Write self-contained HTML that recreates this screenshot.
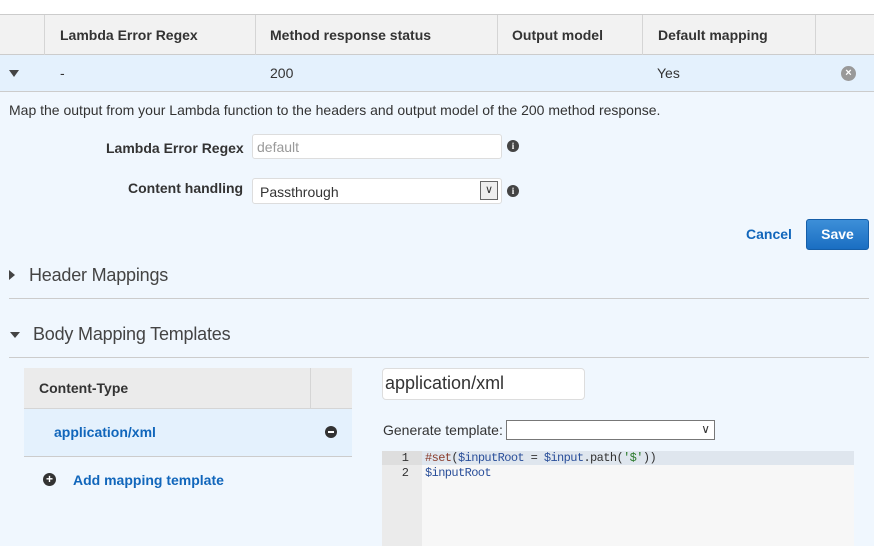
<!DOCTYPE html>
<html><head><meta charset="utf-8"><style>
*{margin:0;padding:0;box-sizing:border-box}
body{width:874px;height:546px;overflow:hidden;background:#f0f7fe;font-family:"Liberation Sans",Arial,sans-serif;font-size:14px;color:#333;position:relative}
.a{position:absolute}
.b{font-weight:bold}
.sep{position:absolute;top:0;width:1px;height:40px;background:#d5d5d5}
.info{position:absolute;width:12px;height:12px;border-radius:50%;background:#444;color:#fff;font:bold 9px "Liberation Serif",serif;text-align:center;line-height:12px}
</style></head><body>
<div class="a" style="left:0;top:0;width:874px;height:14px;background:#fff"></div>
<div class="a" style="left:0;top:14px;width:874px;height:41px;background:#f2f2f2;border-top:1px solid #ccc;border-bottom:1px solid #ccc">
<div class="sep" style="left:44px"></div><div class="sep" style="left:255px"></div><div class="sep" style="left:497px"></div><div class="sep" style="left:642px"></div><div class="sep" style="left:815px"></div>
<div class="a b" style="left:60px;top:12px">Lambda Error Regex</div>
<div class="a b" style="left:270px;top:12px">Method response status</div>
<div class="a b" style="left:512px;top:12px">Output model</div>
<div class="a b" style="left:658px;top:12px">Default mapping</div>
</div>
<div class="a" style="left:0;top:55px;width:874px;height:37px;background:#e4f1fd;border-bottom:1px solid #ccc">
<div class="a" style="left:9px;top:15px;width:0;height:0;border-left:5px solid transparent;border-right:5px solid transparent;border-top:7px solid #444"></div>
<div class="a" style="left:60px;top:10px">-</div>
<div class="a" style="left:270px;top:10px">200</div>
<div class="a" style="left:657px;top:10px">Yes</div>
<div class="a" style="left:841px;top:11px;width:15px;height:15px;border-radius:50%;background:#999;color:#fff;font:bold 11px sans-serif;text-align:center;line-height:15px">×</div>
</div>
<div class="a" style="left:9px;top:102px">Map the output from your Lambda function to the headers and output model of the 200 method response.</div>
<div class="a b" style="left:106px;top:140px">Lambda Error Regex</div>
<div class="a" style="left:252px;top:134px;width:250px;height:25px;background:#fff;border:1px solid #ddd;border-radius:3px;color:#999;padding:4px 4px;font-size:14px">default</div>
<div class="info" style="left:507px;top:140px">i</div>
<div class="a b" style="left:128px;top:180px">Content handling</div>
<div class="a" style="left:252px;top:178px;width:250px;height:26px;background:#fff;border:1px solid #ddd;border-radius:3px;padding:5px 7px">Passthrough</div>
<div class="a" style="left:480px;top:181px;width:18px;height:19px;border:1px solid #666;background:#eee;font-size:11px;text-align:center;line-height:17px">∨</div>
<div class="info" style="left:507px;top:185px">i</div>
<div class="a b" style="left:746px;top:226px;color:#1166bb">Cancel</div>
<div class="a b" style="left:806px;top:219px;width:63px;height:31px;background:linear-gradient(#3d8fd8,#1a6ec2);border:1px solid #155ea8;border-radius:3px;color:#fff;text-align:center;line-height:29px">Save</div>
<div class="a" style="left:9px;top:270px;width:0;height:0;border-top:5px solid transparent;border-bottom:5px solid transparent;border-left:6px solid #444"></div>
<div class="a" style="left:29px;top:265px;font-size:18px;color:#444;letter-spacing:-0.2px">Header Mappings</div>
<div class="a" style="left:9px;top:298px;width:860px;height:1px;background:#ccc"></div>
<div class="a" style="left:10px;top:332px;width:0;height:0;border-left:5px solid transparent;border-right:5px solid transparent;border-top:6px solid #444"></div>
<div class="a" style="left:33px;top:324px;font-size:18px;color:#444;letter-spacing:-0.2px">Body Mapping Templates</div>
<div class="a" style="left:9px;top:357px;width:860px;height:1px;background:#ccc"></div>
<div class="a" style="left:24px;top:368px;width:328px;height:41px;background:#ebebeb;border-bottom:1px solid #d5d5d5"><div class="a" style="left:286px;top:0;width:1px;height:40px;background:#d5d5d5"></div>
<div class="a b" style="left:15px;top:12px">Content-Type</div></div>
<div class="a" style="left:24px;top:409px;width:328px;height:48px;background:#e4f1fd;border-bottom:1px solid #ccc">
<div class="a b" style="left:30px;top:15px;color:#1166bb">application/xml</div>
<div class="a" style="left:301px;top:17px;width:12px;height:12px;border-radius:50%;background:#333"><div class="a" style="left:3px;top:5px;width:6px;height:2px;background:#fff"></div></div></div>
<div class="a" style="left:43px;top:473px;width:13px;height:13px;border-radius:50%;background:#333;color:#fff;font:bold 12px sans-serif;text-align:center;line-height:13px">+</div>
<div class="a b" style="left:73px;top:472px;color:#1166bb">Add mapping template</div>
<div class="a" style="left:382px;top:368px;width:203px;height:32px;background:#fff;border:1px solid #ddd;border-radius:4px;font-size:18px;padding:4px 2px;color:#333">application/xml</div>
<div class="a" style="left:383px;top:422px">Generate template:</div>
<div class="a" style="left:506px;top:420px;width:209px;height:20px;background:#fff;border:1px solid #777"><div class="a" style="right:4px;top:1px;font-size:12px">∨</div></div>
<div class="a" style="left:382px;top:451px;width:472px;height:95px;background:#f7f7f7"></div>
<div class="a" style="left:382px;top:451px;width:40px;height:95px;background:#ebebeb"></div>
<div class="a" style="left:382px;top:451px;width:472px;height:14px;background:#dfe6ee"></div>
<div class="a" style="left:382px;top:451px;width:40px;height:14px;background:#dedede"></div>
<div class="a" style="left:382px;top:451px;font:12px 'Liberation Mono',monospace;line-height:15px;width:27px;text-align:right;color:#333">1<br>2</div>
<div class="a" style="left:425px;top:451px;font:12px 'Liberation Mono',monospace;line-height:15px;color:#333;letter-spacing:-0.6px"><span style="color:#8a3c2c">#set</span>(<span style="color:#2a4f9a">$inputRoot</span> = <span style="color:#2a4f9a">$input</span>.path(<span style="color:#2a7a2a">'$'</span>))<br><span style="color:#2a4f9a">$inputRoot</span></div>
</body></html>
